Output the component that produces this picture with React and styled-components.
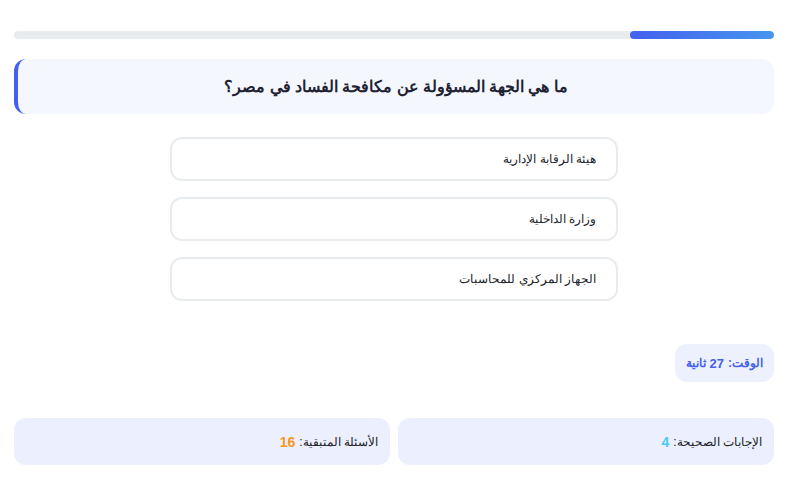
import React from "react";
import styled, { createGlobalStyle } from "styled-components";

const GlobalStyle = createGlobalStyle`
  * { box-sizing: border-box; }
  body {
    margin: 0;
    background: #ffffff;
    font-family: "Liberation Sans", "Noto Sans", sans-serif;
    color: #212529;
  }
`;

const options = [
  "هيئة الرقابة الإدارية",
  "وزارة الداخلية",
  "الجهاز المركزي للمحاسبات",
];

const App = () => {
  const progress = 19;

  return (
    <>
      <GlobalStyle />
      <Page dir="rtl">
        <Track>
          <Fill style={{ width: `${progress}%` }} />
        </Track>

        <Question>ما هي الجهة المسؤولة عن مكافحة الفساد في مصر؟</Question>

        <Options>
          {options.map((opt) => (
            <Option key={opt}>{opt}</Option>
          ))}
        </Options>

        <Timer>
          الوقت: <b>27</b> ثانية
        </Timer>

        <Stats>
          <Stat>
            الإجابات الصحيحة: <Num color="#4cc9f0">4</Num>
          </Stat>
          <Stat>
            الأسئلة المتبقية: <Num color="#f8961e">16</Num>
          </Stat>
        </Stats>
      </Page>
    </>
  );
};

export default App;

const Page = styled.div`
  display: flex;
  flex-direction: column;
  padding: 31px 16px 20px 14px;
`;

const Track = styled.div`
  height: 8px;
  background: #e9ecef;
  border-radius: 4px;
  overflow: hidden;
  display: flex;
`;

const Fill = styled.div`
  height: 100%;
  border-radius: 4px;
  background: linear-gradient(90deg, #4361ee, #4895ef);
`;

const Question = styled.div`
  margin-top: 20px;
  height: 55px;
  display: flex;
  align-items: center;
  justify-content: center;
  background: #f4f7fe;
  border-radius: 12px;
  border-left: 4px solid #4361ee;
  font-size: 15.5px;
  font-weight: bold;
  color: #1f2233;
`;

const Options = styled.div`
  margin: 23px auto 0;
  width: 448px;
  display: flex;
  flex-direction: column;
  gap: 16px;
`;

const Option = styled.div`
  height: 44px;
  display: flex;
  align-items: center;
  padding: 0 20px;
  border: 2px solid #e9ecef;
  border-radius: 12px;
  background: #fff;
  font-size: 12px;
  color: #212529;
`;

const Timer = styled.div`
  margin-top: 43px;
  align-self: flex-start;
  height: 38px;
  padding: 0 11px;
  display: flex;
  align-items: center;
  gap: 4px;
  background: #edf0fd;
  border-radius: 12px;
  color: #4361ee;
  font-size: 12px;
  font-weight: bold;
  b { font-size: 13px; }
`;

const Stats = styled.div`
  margin-top: 36px;
  display: grid;
  grid-template-columns: 1fr 1fr;
  gap: 8px;
`;

const Stat = styled.div`
  height: 47px;
  display: flex;
  align-items: center;
  gap: 4px;
  padding: 0 12px;
  background: #eceffd;
  border-radius: 12px;
  font-size: 12px;
  color: #212529;
`;

const Num = styled.b`
  color: ${(p) => p.color};
  font-size: 14px;
`;
